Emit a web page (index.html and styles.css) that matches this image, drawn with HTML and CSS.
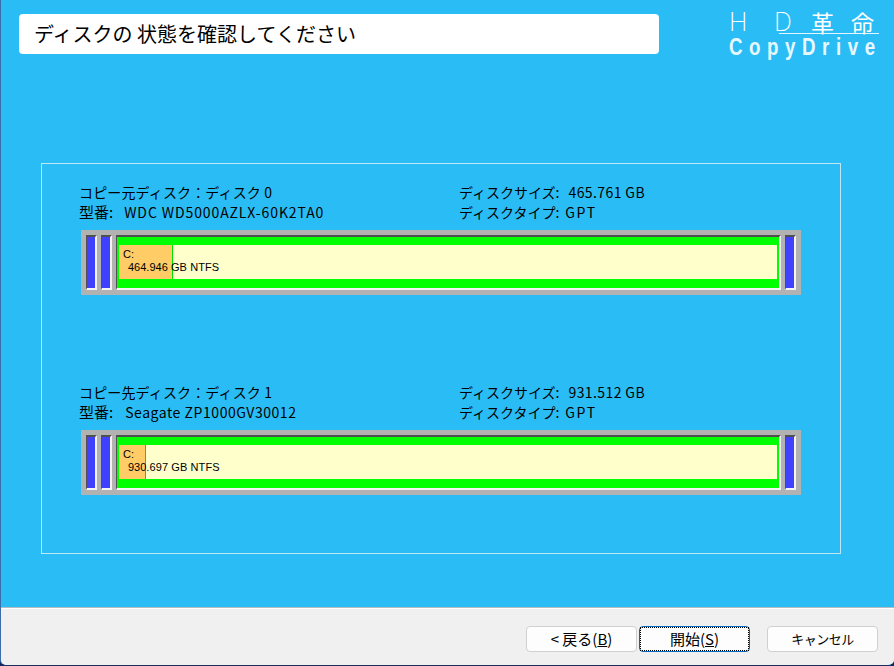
FILE: index.html
```html
<!DOCTYPE html>
<html lang="ja">
<head>
<meta charset="utf-8">
<title>HD革命 CopyDrive</title>
<link rel="stylesheet" href="styles.css">
</head>
<body>
<div class="window">
  <header class="header">
    <h1 class="title">ディスクの 状態を確認してください</h1>
    <div class="logo">
      <div class="logo-top"><span class="logo-h">H</span><span class="logo-d">D</span><span class="logo-kanji">革命</span></div>
      <div class="logo-rule"></div>
      <div class="logo-bottom">CopyDrive</div>
    </div>
  </header>
  <main class="content">
    <section class="frame">
      <div class="disk">
        <div class="info">
          <div class="info-col">
            <div class="source">コピー元ディスク：ディスク 0</div>
            <div><span class="model-key">型番:</span><span class="model model-a">WDC WD5000AZLX-60K2TA0</span></div>
          </div>
          <div class="info-col">
            <div>ディスクサイズ:<span class="num">465.761 GB</span></div>
            <div>ディスクタイプ:<span class="gpt">GPT</span></div>
          </div>
        </div>
        <div class="bar">
          <div class="slot"></div>
          <div class="slot"></div>
          <div class="partition">
            <div class="volume">
              <div class="used used-a"></div>
              <div class="label"><div>C:</div><div class="label-size"><span class="digits">464.946</span> GB NTFS</div></div>
            </div>
          </div>
          <div class="slot"></div>
        </div>
      </div>
      <div class="disk">
        <div class="info">
          <div class="info-col">
            <div class="source">コピー先ディスク：ディスク 1</div>
            <div><span class="model-key">型番:</span><span class="model model-b">Seagate ZP1000GV30012</span></div>
          </div>
          <div class="info-col">
            <div>ディスクサイズ:<span class="num">931.512 GB</span></div>
            <div>ディスクタイプ:<span class="gpt">GPT</span></div>
          </div>
        </div>
        <div class="bar">
          <div class="slot"></div>
          <div class="slot"></div>
          <div class="partition">
            <div class="volume">
              <div class="used used-b"></div>
              <div class="label"><div>C:</div><div class="label-size"><span class="digits">930</span>.697 GB NTFS</div></div>
            </div>
          </div>
          <div class="slot"></div>
        </div>
      </div>
    </section>
  </main>
  <footer class="footer">
    <button class="btn" type="button">&lt; 戻る(<u>B</u>)</button>
    <button class="btn btn-default" type="button"><span class="focus">開始(<u>S</u>)</span></button>
    <button class="btn btn-cancel" type="button">キャンセル</button>
  </footer>
</div>
</body>
</html>
```

FILE: styles.css
```css
* { box-sizing: border-box; }
html, body { margin: 0; padding: 0; background: #14265c; }
body {
  width: 894px;
  height: 666px;
  overflow: hidden;
  font-family: "Noto Sans CJK JP", "Liberation Sans", sans-serif;
  color: #000;
}
.window {
  width: 894px;
  height: 666px;
  display: flex;
  flex-direction: column;
  background: #2abdf5;
  border-left: 1px solid #3a6ea8;
  border-bottom: 1px solid #1c2f5c;
  border-bottom-left-radius: 6px;
  border-bottom-right-radius: 6px;
  overflow: hidden;
}
.header {
  height: 163px;
  padding: 14px 14px 0 18px;
  display: flex;
  justify-content: space-between;
  align-items: flex-start;
}
.title {
  margin: 0;
  width: 640px;
  height: 40px;
  padding-left: 15px;
  background: #fff;
  border-radius: 4px;
  font-size: 20px;
  font-weight: 400;
  line-height: 39px;
  white-space: pre;
}
.logo {
  width: 151px;
  margin-top: -2px;
  color: #fff;
}
.logo-top {
  height: 21px;
  display: flex;
  align-items: center;
  font-family: Inter, "Liberation Sans", sans-serif;
  font-size: 25px;
  font-weight: 200;
  line-height: 21px;
  white-space: nowrap;
}
.logo-h { flex: none; width: 45px; }
.logo-d { flex: none; width: 37px; }
.logo-kanji {
  flex: none;
  font-family: "Noto Sans CJK JP", sans-serif;
  font-size: 23px;
  font-weight: 400;
  letter-spacing: 17px;
  white-space: nowrap;
}
.logo-rule {
  width: 100px;
  height: 1px;
  margin: 0 0 0 50px;
  background: #e4f6fd;
}
.logo-bottom {
  margin-top: 1px;
  font-family: "Liberation Sans", sans-serif;
  font-size: 24px;
  font-weight: 700;
  line-height: 23px;
  letter-spacing: 8.4px;
  color: #e8f8fe;
  white-space: nowrap;
  transform: scaleX(0.78);
  transform-origin: left center;
}
.content {
  flex: 1;
  padding: 0 0 0 40px;
}
.frame {
  width: 800px;
  height: 391px;
  border: 1px solid #bfe6f5;
  padding: 18px 39px 0;
  display: flex;
  flex-direction: column;
  gap: 87px;
}
.disk { width: 720px; }
.info {
  display: flex;
  height: 48px;
  margin-left: -2px;
  font-size: 14px;
  line-height: 20px;
}
.info-col { white-space: nowrap; }
.info-col:first-child { width: 380px; }
.source { letter-spacing: 0.15px; }
.model-key { font-size: 15px; }
.model { margin-left: 11px; }
.model-a { letter-spacing: 0.9px; }
.model-b { margin-left: 12px; letter-spacing: 0.55px; }
.num { margin-left: 9px; letter-spacing: 0.4px; }
.gpt { margin-left: 6px; letter-spacing: 1.6px; }
.bar {
  height: 65px;
  padding: 5px;
  background: #b2b2b2;
  display: flex;
  gap: 4px;
}
.slot, .partition {
  border-style: solid;
  border-width: 1px 2px 2px 1px;
  border-color: #505050 #f4f4f4 #f4f4f4 #505050;
}
.slot {
  width: 11px;
  flex: none;
  background: #4040ff;
  border-top-width: 2px;
}
.partition {
  flex: 1;
  background: #00ff00;
  padding: 8px 2px 9px 2px;
  border-top-width: 2px;
}
.volume {
  position: relative;
  height: 100%;
  background: #ffffcc;
  font-family: "Liberation Sans", sans-serif;
  font-size: 11px;
  line-height: 12px;
}
.used {
  height: 100%;
  background: #ffcc66;
  border-right: 1px solid #00e000;
}
.used-a { width: 54px; }
.used-b { width: 27px; }
.label {
  position: absolute;
  left: 4px;
  top: 3px;
  white-space: nowrap;
}
.label-size { padding-left: 5px; margin-top: 1px; letter-spacing: 0.1px; }
.digits { letter-spacing: 0; }
.footer {
  height: 58px;
  flex: none;
  background: #f0f0f0;
  border-top: 1px solid #b5bcc0;
  box-shadow: inset 0 1px 0 #fff;
  padding: 18px 15px 0 525px;
  display: flex;
  align-items: flex-start;
}
.btn {
  width: 111px;
  height: 26px;
  padding: 0;
  background: #fdfdfd;
  border: 1px solid #d0d0d0;
  border-radius: 4px;
  font-family: "Noto Sans CJK JP", sans-serif;
  font-size: 15px;
  line-height: 22px;
  color: #000;
}
.btn-default {
  margin-left: 2px;
  border: 1px solid #0067c0;
  padding: 1px;
}
.focus {
  display: block;
  height: 22px;
  outline: 1px dotted #000;
}
.btn-cancel {
  margin-left: 17px;
  font-size: 13px;
  letter-spacing: -0.5px;
}
```
